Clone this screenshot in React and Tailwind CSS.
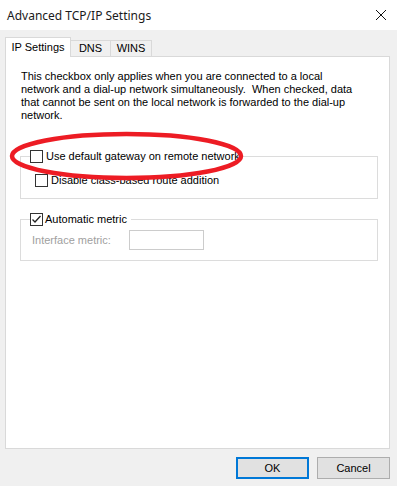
import React from 'react';

function Box({ checked }) {
    return (
        <span className="w-[13px] h-[13px] border border-[#333333] bg-white flex items-center justify-center shrink-0">
            {checked && (
                <svg width="11" height="11" viewBox="0 0 11 11">
                    <path d="M1.5 5.5 L4 8 L9.5 2" fill="none" stroke="#222" strokeWidth="1.3" />
                </svg>
            )}
        </span>
    );
}

export default function App() {
    return (
        <div className="w-[397px] h-[486px] bg-[#f0f0f0] flex flex-col text-[11px] text-black leading-[13px]" style={{ fontFamily: '"Liberation Sans", Arial, sans-serif' }}>
            <div className="h-[30px] bg-white flex items-center justify-between pl-[7px] pr-[10px] shrink-0">
                <span className="text-[12px] text-[#1a1a1a]" style={{ fontFamily: '"Noto Sans", "Liberation Sans", sans-serif' }}>Advanced TCP/IP Settings</span>
                <svg width="12" height="12" viewBox="0 0 12 12">
                    <path d="M1 1 L11 11 M11 1 L1 11" stroke="#111" strokeWidth="1" />
                </svg>
            </div>

            <div className="flex items-end pl-[5px] mt-[7px] h-[19px] relative z-10">
                <div className="h-[20px] w-[66px] bg-white border border-b-0 border-[#d9d9d9] flex items-center justify-center -mb-px">IP Settings</div>
                <div className="h-[16px] w-[40px] border border-l-0 border-b-0 border-[#d9d9d9] flex items-center justify-center">DNS</div>
                <div className="h-[16px] w-[41px] border border-l-0 border-b-0 border-[#d9d9d9] flex items-center justify-center">WINS</div>
            </div>

            <div className="ml-[5px] w-[385px] h-[393px] bg-white border border-[#d9d9d9] relative">
                <p className="mt-[13px] ml-[15px] whitespace-nowrap">
                    This checkbox only applies when you are connected to a local<br />
                    network and a dial-up network simultaneously.&nbsp; When checked, data<br />
                    that cannot be sent on the local network is forwarded to the dial-up<br />
                    network.
                </p>

                <div className="mt-[34px] ml-[14px] w-[358px] h-[43px] border border-[#dcdcdc]">
                    <div className="flex items-center gap-[3px] -mt-[7px] ml-[9px] bg-white w-fit pr-[2px]">
                        <Box />
                        <span>Use default gateway on remote network</span>
                    </div>
                    <div className="flex items-center gap-[3px] mt-[11px] ml-[14px]">
                        <Box />
                        <span>Disable class-based route addition</span>
                    </div>
                </div>

                <div className="mt-[20px] ml-[14px] w-[358px] h-[42px] border border-[#dcdcdc]">
                    <div className="flex items-center gap-[2px] -mt-[7px] ml-[9px] bg-white w-fit pr-[4px]">
                        <Box checked />
                        <span>Automatic metric</span>
                    </div>
                    <div className="flex items-center mt-[4px] ml-[11px]">
                        <span className="text-[#a0a0a0] w-[97px]">Interface metric:</span>
                        <div className="w-[75px] h-[20px] border border-[#cccccc] bg-white" />
                    </div>
                </div>

                <svg className="absolute left-0 top-[72px]" width="245" height="54" viewBox="0 0 245 54">
                    <ellipse cx="120.5" cy="27" rx="114.5" ry="22" fill="none" stroke="#ed1c24" strokeWidth="4.5" />
                </svg>
            </div>

            <div className="flex justify-end gap-[8px] pr-[7px] mt-[8px]">
                <button className="w-[73px] h-[22px] bg-[#e1e1e1] border-2 border-[#0078d7] flex items-center justify-center">OK</button>
                <button className="w-[73px] h-[22px] bg-[#e1e1e1] border border-[#adadad] flex items-center justify-center">Cancel</button>
            </div>
        </div>
    );
}
